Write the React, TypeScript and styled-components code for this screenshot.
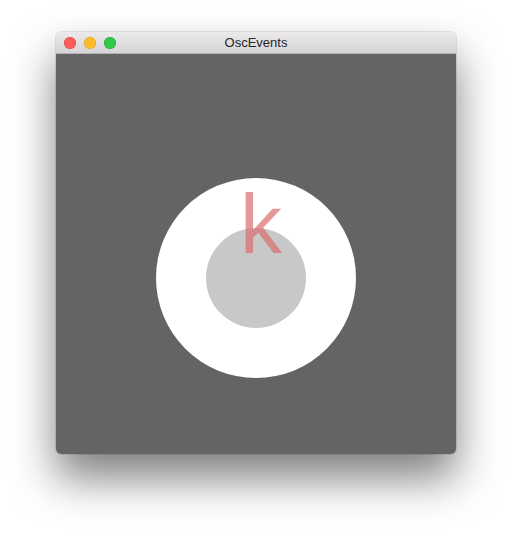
import React from 'react'
import styled, { createGlobalStyle } from 'styled-components'

const GlobalStyle = createGlobalStyle`
	html, body {
		margin: 0;
		padding: 0;
		background: #ffffff;
		font-family: 'Liberation Sans', Arial, sans-serif;
	}
`

const Page = styled.div`
	width: 512px;
	height: 534px;
	display: flex;
	justify-content: center;
	align-items: flex-start;
	padding-top: 32px;
	box-sizing: border-box;
	overflow: hidden;
`

const Window = styled.div`
	width: 400px;
	display: flex;
	flex-direction: column;
	border-radius: 5px;
	box-shadow: 0 24px 44px rgba(0, 0, 0, 0.5), 0 0 0 0.5px rgba(0, 0, 0, 0.2);
	overflow: hidden;
`

const TitleBar = styled.div`
	position: relative;
	height: 22px;
	display: flex;
	align-items: center;
	padding-left: 8px;
	gap: 8px;
	background: linear-gradient(#ebeaeb, #d6d4d6);
	border-bottom: 1px solid #b4b4b4;
	box-sizing: border-box;
`

const Light = styled.span<{ $fill: string; $edge: string }>`
	width: 12px;
	height: 12px;
	border-radius: 50%;
	background: ${(p) => p.$fill};
	box-shadow: inset 0 0 0 0.5px ${(p) => p.$edge};
	box-sizing: border-box;
`

const Title = styled.div`
	position: absolute;
	left: 0;
	right: 0;
	top: 0;
	bottom: 0;
	display: flex;
	align-items: center;
	justify-content: center;
	font-size: 13px;
	color: #262626;
	pointer-events: none;
`

const Canvas = styled.svg`
	display: block;
	width: 400px;
	height: 400px;
	background: #646464;
`

export default function App() {
	return (
		<>
			<GlobalStyle />
			<Page>
				<Window>
					<TitleBar>
						<Light $fill="#fc5f57" $edge="#df4744" />
						<Light $fill="#fdbc2e" $edge="#dea123" />
						<Light $fill="#34c84a" $edge="#27aa35" />
						<Title>OscEvents</Title>
					</TitleBar>
					<Canvas viewBox="0 0 400 400">
						<circle cx="200" cy="224" r="100" fill="#ffffff" />
						<circle cx="200" cy="224" r="50" fill="#c8c8c8" />
						<text
							x="184"
							y="199"
							fontSize="84"
							fontFamily="'Liberation Sans', Arial, sans-serif"
							fill="rgba(218, 108, 108, 0.7)"
						>
							k
						</text>
					</Canvas>
				</Window>
			</Page>
		</>
	)
}
